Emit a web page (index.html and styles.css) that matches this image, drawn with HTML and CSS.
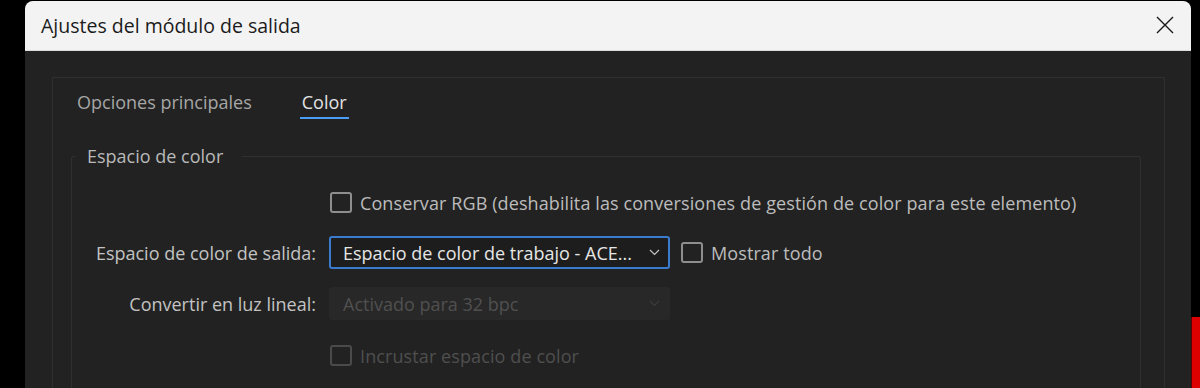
FILE: index.html
```html
<!DOCTYPE html>
<html lang="es">
<head>
    <meta charset="UTF-8">
    <title>Ajustes del módulo de salida</title>
    <link rel="stylesheet" href="styles.css">
</head>
<body>
    <div class="backdrop">
        <div class="window">
            <div class="titlebar">
                <span class="title">Ajustes del módulo de salida</span>
                <button class="close" type="button" aria-label="Cerrar">
                    <svg width="18" height="18" viewBox="0 0 18 18">
                        <path d="M1 1 L17 17 M17 1 L1 17" stroke="#1a1a1a" stroke-width="1.4" fill="none"/>
                    </svg>
                </button>
            </div>
            <div class="body">
                <div class="panel">
                    <div class="tabs">
                        <span class="tab">Opciones principales</span>
                        <span class="tab active">Color</span>
                    </div>
                    <fieldset class="group">
                        <legend>Espacio de color</legend>
                        <div class="form">
                            <div class="row">
                                <span class="label"></span>
                                <label class="check">
                                    <span class="box"></span>
                                    Conservar RGB (deshabilita las conversiones de gestión de color para este elemento)
                                </label>
                            </div>
                            <div class="row">
                                <span class="label">Espacio de color de salida:</span>
                                <div class="controls">
                                    <div class="select focused">
                                        <span class="value">Espacio de color de trabajo - ACE...</span>
                                        <svg class="chev" width="11" height="7" viewBox="0 0 11 7"><path d="M1 1 L5.5 5.5 L10 1" stroke="#c4c4c4" stroke-width="1.2" fill="none"/></svg>
                                    </div>
                                    <label class="check">
                                        <span class="box"></span>
                                        Mostrar todo
                                    </label>
                                </div>
                            </div>
                            <div class="row">
                                <span class="label">Convertir en luz lineal:</span>
                                <div class="select disabled">
                                    <span class="value">Activado para 32 bpc</span>
                                    <svg class="chev" width="11" height="7" viewBox="0 0 11 7"><path d="M1 1 L5.5 5.5 L10 1" stroke="#3c3c3c" stroke-width="1.2" fill="none"/></svg>
                                </div>
                            </div>
                            <div class="row">
                                <span class="label"></span>
                                <label class="check disabled">
                                    <span class="box"></span>
                                    Incrustar espacio de color
                                </label>
                            </div>
                        </div>
                    </fieldset>
                </div>
            </div>
        </div>
        <div class="red-edge"></div>
    </div>
</body>
</html>
```

FILE: styles.css
```css
body {
    margin: 0;
    background-color: #000;
    font-family: "Open Sans", "Noto Sans", sans-serif;
    overflow: hidden;
}

.backdrop {
    display: flex;
    height: 388px;
    padding-left: 25px;
    padding-top: 1px;
    box-sizing: border-box;
}

.window {
    width: 1167px;
    border-radius: 8px 8px 0 0;
    overflow: hidden;
    background-color: #222222;
}

.red-edge {
    width: 8px;
    margin-top: 316px;
    background-color: #dc0000;
    border-left: 1px solid #5a0000;
}

.titlebar {
    height: 49px;
    background-color: #f3f3f3;
    display: flex;
    align-items: center;
    justify-content: space-between;
    padding: 0 16px 0 16px;
    border-bottom: 1px solid #dcdcdc;
}

.title {
    font-size: 19.5px;
    color: #1b1b1b;
}

.close {
    background: none;
    border: none;
    padding: 0;
    width: 18px;
    height: 18px;
    margin-right: 1px;
    margin-top: -2px;
}

.body {
    padding: 26px 26px 0 27px;
}

.panel {
    border: 1px solid #2f2f2f;
    border-bottom: none;
    height: 320px;
    padding: 0 23px 0 18px;
}

.tabs {
    display: flex;
    gap: 48px;
    height: 42px;
    padding-left: 6px;
    padding-top: 12px;
    box-sizing: border-box;
}

.tab {
    font-size: 18px;
    color: #a6a6a6;
    height: 29px;
    box-sizing: border-box;
}

.tab.active {
    color: #e3e3e3;
    padding: 0 2px;
    border-bottom: 2px solid #4b9cf5;
}

.group {
    margin: 24px 0 0 0;
    border: 1px solid #303030;
    border-bottom: none;
    border-radius: 3px 3px 0 0;
    padding: 18px 0 0 0;
}

.group legend {
    font-size: 18px;
    color: #b9b9b9;
    padding: 0 19px 0 12px;
    margin-left: 3px;
}

.form {
    display: flex;
    flex-direction: column;
}

.row {
    display: grid;
    grid-template-columns: 244px 1fr;
    column-gap: 13px;
    align-items: center;
    min-height: 33px;
    margin-bottom: 18px;
}

.row:first-child {
    margin-bottom: 17px;
}

.row:nth-child(3) {
    margin-bottom: 19px;
}

.label {
    text-align: right;
    font-size: 18px;
    color: #c2c2c2;
}

.controls {
    display: flex;
    align-items: center;
    gap: 10px;
}

.check {
    display: flex;
    align-items: center;
    gap: 8px;
    font-size: 18px;
    letter-spacing: 0.1px;
    color: #bcbcbc;
    padding-left: 1px;
}

.box {
    width: 22px;
    height: 21px;
    border: 2px solid #8e8e8e;
    border-radius: 3px;
    box-sizing: border-box;
}

.check.disabled {
    color: #4f4f4f;
}

.check.disabled .box {
    border-color: #4a4a4a;
}

.select {
    width: 341px;
    height: 33px;
    box-sizing: border-box;
    display: flex;
    align-items: center;
    justify-content: space-between;
    padding: 0 10px 0 14px;
    border-radius: 3px;
    font-size: 18px;
}

.select.focused {
    background-color: #1d1d1d;
    border: 2px solid #3a7bd0;
    color: #e6e6e6;
    padding-left: 12px;
    padding-right: 8px;
}

.select.disabled {
    background-color: #282828;
    color: #505050;
}
```
